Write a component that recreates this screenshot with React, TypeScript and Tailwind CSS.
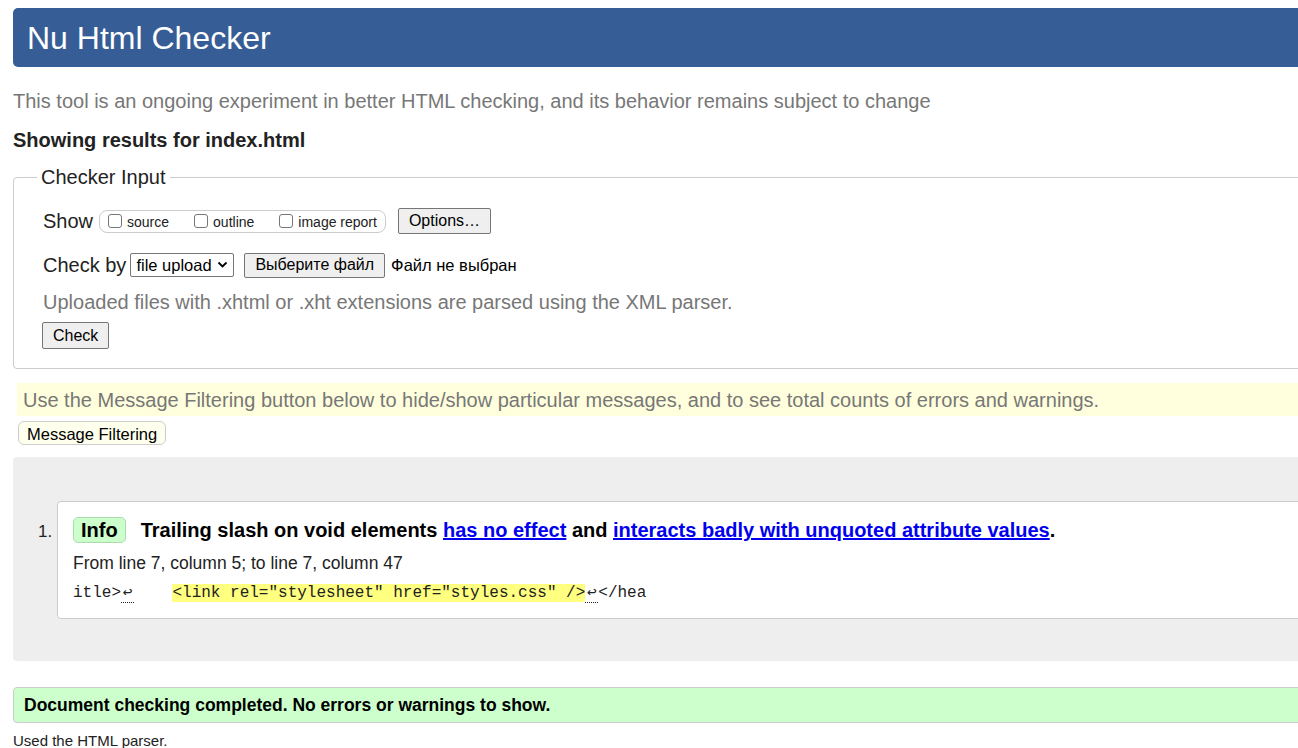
import React from "react";

const sans = "font-['Liberation_Sans',Arial,sans-serif]";
const mono = "font-['Liberation_Mono','DejaVu_Sans_Mono',monospace]";

function Checkbox({ label }: { label: string }) {
  return (
    <label className="flex items-center gap-[5px] text-[14px] text-[#222]">
      <span className="inline-block h-[14px] w-[14px] rounded-[3px] border border-[#767676] bg-white" />
      <span className="mt-[3px]">{label}</span>
    </label>
  );
}

function GrayButton({ children, className = "" }: { children: React.ReactNode; className?: string }) {
  return (
    <button
      className={`rounded-[2px] border border-[#767676] bg-[#efefef] px-[10px] text-[16px] leading-[22px] text-black ${className}`}
    >
      {children}
    </button>
  );
}

function LineBreakMark() {
  return (
    <abbr
      className="inline-block w-[13px] border-b border-dotted border-[#222] text-center leading-[18px] no-underline"
      title="line break"
    >
      ↩
    </abbr>
  );
}

export default function App() {
  return (
    <div className={`h-[748px] w-[1298px] overflow-hidden bg-white ${sans}`}>
      <div className="w-[1360px] pl-[13px] pt-[8px]">
        <header className="flex h-[59px] items-center rounded-l-[5px] bg-[#365d95] pl-[14px]">
          <h1 className="text-[32px] leading-none text-white">Nu Html Checker</h1>
        </header>

        <p className="mt-[23px] text-[20px] leading-[22px] text-[#777]">
          This tool is an ongoing experiment in better HTML checking, and its behavior remains subject to change
        </p>

        <p className="mt-[17px] text-[20px] font-bold leading-[22px] text-[#222]">Showing results for index.html</p>

        <fieldset className="mt-[15px] rounded-l-[4px] border border-[#ccc] pb-[19px] pl-[29px] pt-[4px]">
          <legend className="-ml-[6px] px-[4px] text-[20px] leading-[22px] text-[#222]">Checker Input</legend>

          <div className="mt-[14px] flex items-center">
            <span className="text-[20px] text-[#222]">Show</span>
            <div className="ml-[6px] flex h-[23px] items-center gap-[25px] rounded-[8px] border border-[#ccc] pl-[8px] pr-[8px]">
              <Checkbox label="source" />
              <Checkbox label="outline" />
              <Checkbox label="image report" />
            </div>
            <GrayButton className="ml-[12px] h-[26px]">Options…</GrayButton>
          </div>

          <div className="mt-[14px] flex items-center">
            <span className="text-[20px] text-[#222]">Check by</span>
            <div className="ml-[4px] flex h-[24px] w-[104px] items-center justify-between rounded-[2px] border border-[#767676] bg-white pl-[5px] pr-[5px] text-[16.5px] text-black">
              file upload
              <svg width="11" height="8" viewBox="0 0 11 8" fill="none">
                <path d="M1.5 1.5 L5.5 5.5 L9.5 1.5" stroke="black" strokeWidth="1.8" />
              </svg>
            </div>
            <GrayButton className="ml-[10px] h-[25px]">Выберите файл</GrayButton>
            <span className="ml-[6px] text-[16.5px] text-black">Файл не выбран</span>
          </div>

          <p className="mt-[11px] text-[20px] leading-[22px] text-[#777]">
            Uploaded files with .xhtml or .xht extensions are parsed using the XML parser.
          </p>

          <GrayButton className="-ml-[1px] mt-[9px] h-[27px]">Check</GrayButton>
        </fieldset>

        <div className="ml-[4px] mt-[14px] flex h-[33px] items-center bg-[#ffffdd] pl-[6px]">
          <p className="text-[20px] text-[#777]">
            Use the Message Filtering button below to hide/show particular messages, and to see total counts of errors and warnings.
          </p>
        </div>

        <button className="ml-[5px] mt-[5px] h-[24px] rounded-[6px] border border-[#ccc] bg-[#ffffee] px-[8px] text-[16.5px] text-black">
          Message Filtering
        </button>

        <div className="mt-[10px] h-[204px] rounded-l-[4px] bg-[#eeeeee] pt-[44px]">
          <ol className="flex">
            <li className="flex w-full">
              <span className="ml-[25px] mt-[18px] w-[19px] text-[17px] text-[#222]">1.</span>
              <div className="h-[118px] flex-1 rounded-l-[4px] border border-[#ccc] bg-white pl-[15px] pt-[13px]">
                <p className="flex items-center text-[20px] font-bold text-black">
                  <span className="mr-[15px] flex h-[26px] items-center rounded-[5px] border border-[#aaddaa] bg-[#ccffcc] px-[7px]">
                    Info
                  </span>
                  <span>
                    Trailing slash on void elements{" "}
                    <a href="#" className="text-[#0000ee] underline">
                      has no effect
                    </a>{" "}
                    and{" "}
                    <a href="#" className="text-[#0000ee] underline">
                      interacts badly with unquoted attribute values
                    </a>
                    .
                  </span>
                </p>
                <p className="mt-[5px] text-[17.5px] text-[#222]">From line 7, column 5; to line 7, column 47</p>
                <p className={`mt-[5px] whitespace-pre text-[16px] text-[#222] ${mono}`}>
                  itle&gt;
                  <LineBreakMark />
                  {"    "}
                  <mark className="bg-[#ffff80] text-[#222]">&lt;link rel="stylesheet" href="styles.css" /&gt;</mark>
                  <LineBreakMark />
                  &lt;/hea
                </p>
              </div>
            </li>
          </ol>
        </div>

        <div className="mt-[26px] flex h-[36px] items-center rounded-l-[4px] border border-[#ccc] bg-[#ccffcc] pl-[10px]">
          <p className="text-[17.5px] font-bold text-black">Document checking completed. No errors or warnings to show.</p>
        </div>

        <p className="mt-[9px] text-[15px] leading-[17px] text-[#222]">Used the HTML parser.</p>
      </div>
    </div>
  );
}
